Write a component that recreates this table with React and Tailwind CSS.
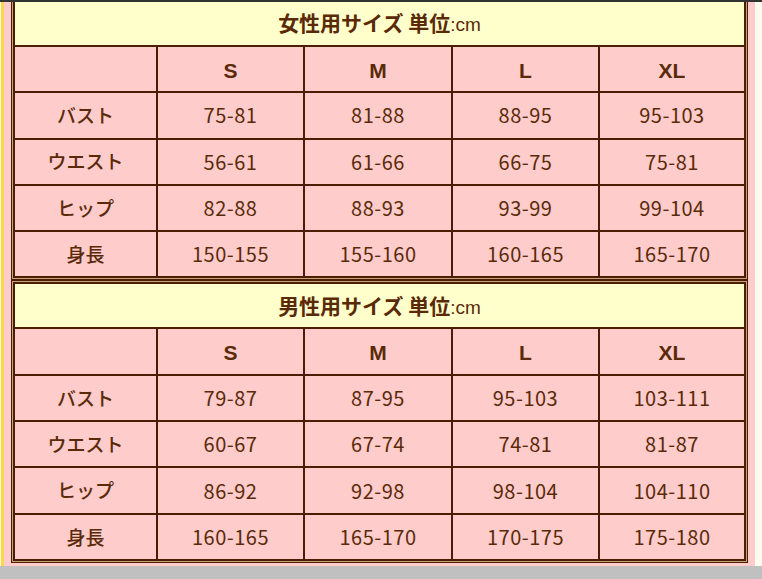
import React from 'react';

const sizes = ['S', 'M', 'L', 'XL'];

const women = [
  ['バスト', '75-81', '81-88', '88-95', '95-103'],
  ['ウエスト', '56-61', '61-66', '66-75', '75-81'],
  ['ヒップ', '82-88', '88-93', '93-99', '99-104'],
  ['身長', '150-155', '155-160', '160-165', '165-170'],
];

const men = [
  ['バスト', '79-87', '87-95', '95-103', '103-111'],
  ['ウエスト', '60-67', '67-74', '74-81', '81-87'],
  ['ヒップ', '86-92', '92-98', '98-104', '104-110'],
  ['身長', '160-165', '165-170', '170-175', '175-180'],
];

const jp = { fontFamily: '"Noto Sans CJK JP", "Noto Sans", sans-serif' };
const latin = { fontFamily: '"Liberation Sans", Arial, sans-serif' };

const cell = 'border-2 border-[#4a1e04] text-center align-middle p-0';

const SizeTable = ({ title, rows }) => (
  <div className="border border-[#4a1e04] p-px bg-[#c9a27a]">
    <table className="w-full border-collapse table-fixed text-[#5a2a08]">
      <colgroup>
        <col className="w-[143px]" />
        <col className="w-[147px]" />
        <col className="w-[148px]" />
        <col className="w-[147px]" />
        <col />
      </colgroup>
      <tbody>
        <tr className="h-[45px] bg-[#ffffcc]">
          <td colSpan={5} className={cell}>
            <span className="text-[21px] font-bold" style={jp}>{title}</span>
            <span className="text-[19px]" style={latin}>:cm</span>
          </td>
        </tr>
        <tr className="h-[46.3px] bg-[#ffcccc]">
          <td className={cell}></td>
          {sizes.map(s => (
            <td key={s} className={`${cell} text-[21px] font-bold pt-[3px]`} style={latin}>{s}</td>
          ))}
        </tr>
        {rows.map(r => (
          <tr key={r[0]} className="h-[46.3px] bg-[#ffcccc]">
            <td className={`${cell} text-[19px] font-medium`} style={jp}>{r[0]}</td>
            {r.slice(1).map((v, i) => (
              <td key={i} className={`${cell} text-[20px] tracking-[0.5px]`} style={jp}>{v}</td>
            ))}
          </tr>
        ))}
      </tbody>
    </table>
  </div>
);

export default function App() {
  return (
    <div className="w-[762px] h-[579px] flex flex-col bg-[#ffcccc] overflow-hidden">
      <div className="relative z-10 h-[2px] bg-[#333333] shrink-0" />
      <div className="flex flex-1 min-h-0 mt-[-4px]">
        <div className="w-px bg-[#fff8e0]" />
        <div className="w-[3px] bg-[#ffd84a]" />
        <div className="flex-1 pl-[7px] pr-[7px] flex flex-col">
          <SizeTable title="女性用サイズ 単位" rows={women} />
          <SizeTable title="男性用サイズ 単位" rows={men} />
        </div>
        <div className="w-[7px] bg-[#fffaf0]" />
      </div>
      <div className="h-[13px] bg-[#c0c0c0] shrink-0" />
    </div>
  );
}
